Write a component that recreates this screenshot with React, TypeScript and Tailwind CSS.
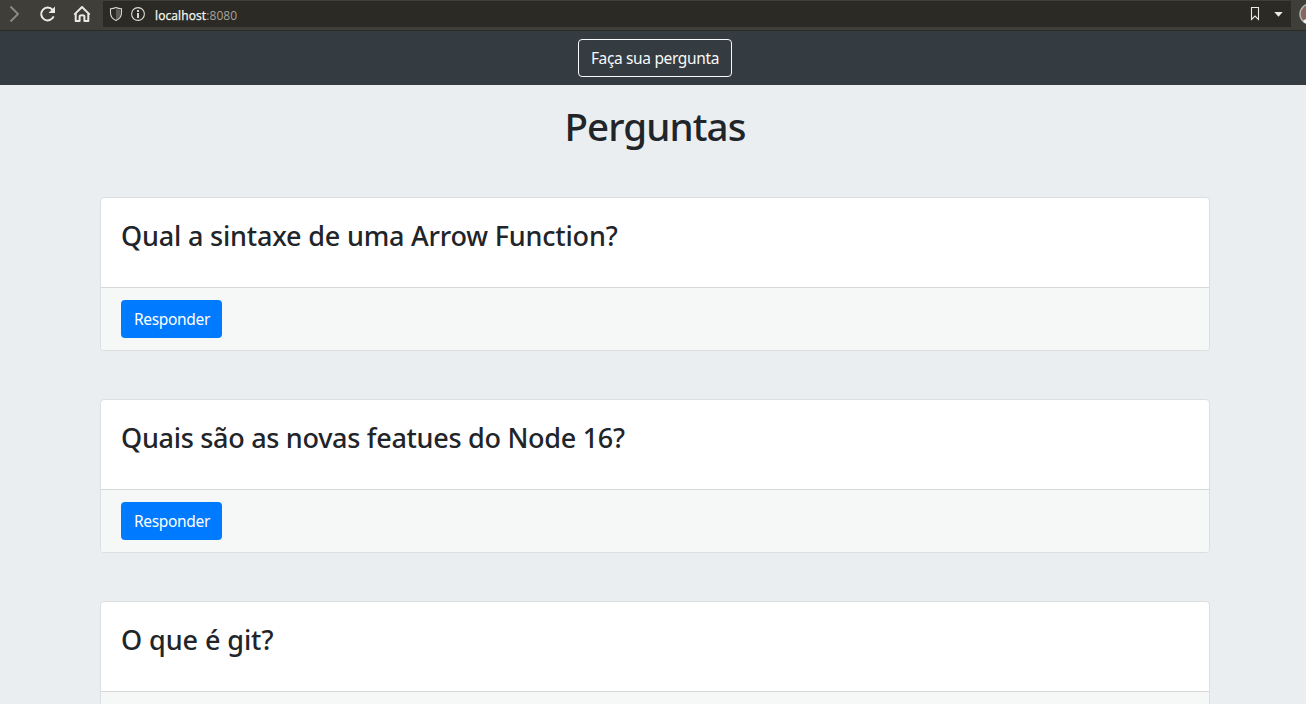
const questions = [
  { text: 'Qual a sintaxe de uma Arrow Function?', spacing: 'tracking-[-0.19px]', hasAnswerButton: true },
  { text: 'Quais são as novas featues do Node 16?', spacing: 'tracking-[-0.29px]', hasAnswerButton: true },
  { text: 'O que é git?', spacing: 'tracking-[-0.08px]', hasAnswerButton: false },
];

function BrowserBar() {
  return (
    <header className="flex h-[31px] shrink-0 items-start overflow-hidden border-b border-[#2c2b26] bg-[#403e38]">
      <div className="flex h-[30px] w-[103px] shrink-0 text-[#ebebe2]">
        <svg width="103" height="30" viewBox="0 0 103 30" fill="none">
          <path d="M10.5 6.5 L18 14 L10.5 21.5" stroke="#8d8c87" strokeWidth="1.8" />
          <path d="M52.6 10 A6.4 6.4 0 1 0 53.6 16.3" stroke="currentColor" strokeWidth="2" />
          <path d="M55 6.5 V13 H48.5 Z" fill="currentColor" />
          <path d="M74.3 14.6 L82 7 L89.7 14.6" stroke="currentColor" strokeWidth="2" strokeLinejoin="round" />
          <path d="M75.7 13.5 V21 H79.6 V16.5 Q79.6 15.3 82 15.3 Q84.4 15.3 84.4 16.5 V21 H88.3 V13.5" stroke="currentColor" strokeWidth="2" strokeLinejoin="round" />
        </svg>
      </div>
      <div className="mt-px flex h-[26px] w-[1188px] shrink-0 items-center bg-[#2b2a25]">
        <svg className="shrink-0" width="52" height="26" viewBox="103 1 52 26" fill="none">
          <path d="M116 9 L120.5 10 V14 Q120.5 17.5 116 19.6 Z" fill="#5c5b56" />
          <path d="M116 7.6 Q118.5 8.8 121.5 8.8 V13 Q121.3 18.2 116 20.6 Q110.7 18.2 110.5 13 V8.8 Q113.5 8.8 116 7.6 Z" stroke="#d6d6ce" strokeWidth="1.1" />
          <circle cx="138" cy="14" r="6.4" stroke="#deded6" strokeWidth="1.1" />
          <path d="M138 10 V11.9 M138 13 V18" stroke="#ebebe2" strokeWidth="1.8" />
        </svg>
        <span className="pt-[3px] font-['Open_Sans','Noto_Sans',sans-serif] text-[12px] leading-[18px] tracking-[0.1px] whitespace-nowrap text-[#a5a49e]">
          <span className="text-[#f8f8f2] [-webkit-text-stroke:0.25px_#f8f8f2]">localhost</span>:8080
        </span>
        <svg className="ml-auto shrink-0" width="51" height="26" viewBox="1240 1 51 26" fill="none">
          <path d="M1251.5 7.5 H1258.5 V19.5 L1255 16 L1251.5 19.5 Z" stroke="#ebebe2" strokeWidth="1.1" />
          <path d="M1274.3 12 H1282.7 L1278.5 16.8 Z" fill="#ebebe2" />
        </svg>
      </div>
      <svg className="shrink-0" width="15" height="30" viewBox="1291 0 15 30">
        <circle cx="1310" cy="14" r="10" fill="#86695c" stroke="#b9b9b4" strokeWidth="1.4" />
        <path d="M1303 21 Q1305 18 1310 20 V24 Q1305 24 1303 21 Z" fill="#f1f1ed" />
      </svg>
    </header>
  );
}

export default function App() {
  return (
    <div className="flex h-[704px] w-full flex-col overflow-hidden bg-[#ebeef1] font-['Noto_Sans','Open_Sans',sans-serif] text-[#212529]">
      <BrowserBar />
      <nav className="flex h-[54px] shrink-0 justify-center bg-[#343b41] pt-2 pl-1">
        <button className="h-[38px] w-[154px] rounded-[4px] border border-[#f8f9fa] text-[15.5px] leading-6 tracking-[-0.35px] whitespace-nowrap text-[#f8f9fa]">
          Faça sua pergunta
        </button>
      </nav>
      <main className="flex flex-col pr-24 pl-[100px]">
        <h1 className="mt-[17px] text-center text-[38.5px] leading-[48px] font-medium tracking-[-0.9px]">
          Perguntas
        </h1>
        <div className="mt-[47px] flex flex-col gap-12">
          {questions.map((question) => (
            <article
              key={question.text}
              className="h-[154px] shrink-0 overflow-hidden rounded-[4px] border border-[#dcdfe0] bg-white"
            >
              <div className="h-[89px] px-5 pt-[21px]">
                <h3 className="text-[27px] leading-[34px] font-medium whitespace-nowrap">
                  <span className={question.spacing}>{question.text}</span>
                </h3>
              </div>
              <div className="h-[63px] border-t border-[#d6d9da] bg-[#f6f8f7] px-5 pt-3">
                {question.hasAnswerButton && (
                  <button className="h-[38px] w-[101px] rounded-[4px] bg-[#007bff] pl-px text-[15.5px] leading-6 tracking-[-0.33px] whitespace-nowrap text-white">
                    Responder
                  </button>
                )}
              </div>
            </article>
          ))}
        </div>
      </main>
    </div>
  );
}
